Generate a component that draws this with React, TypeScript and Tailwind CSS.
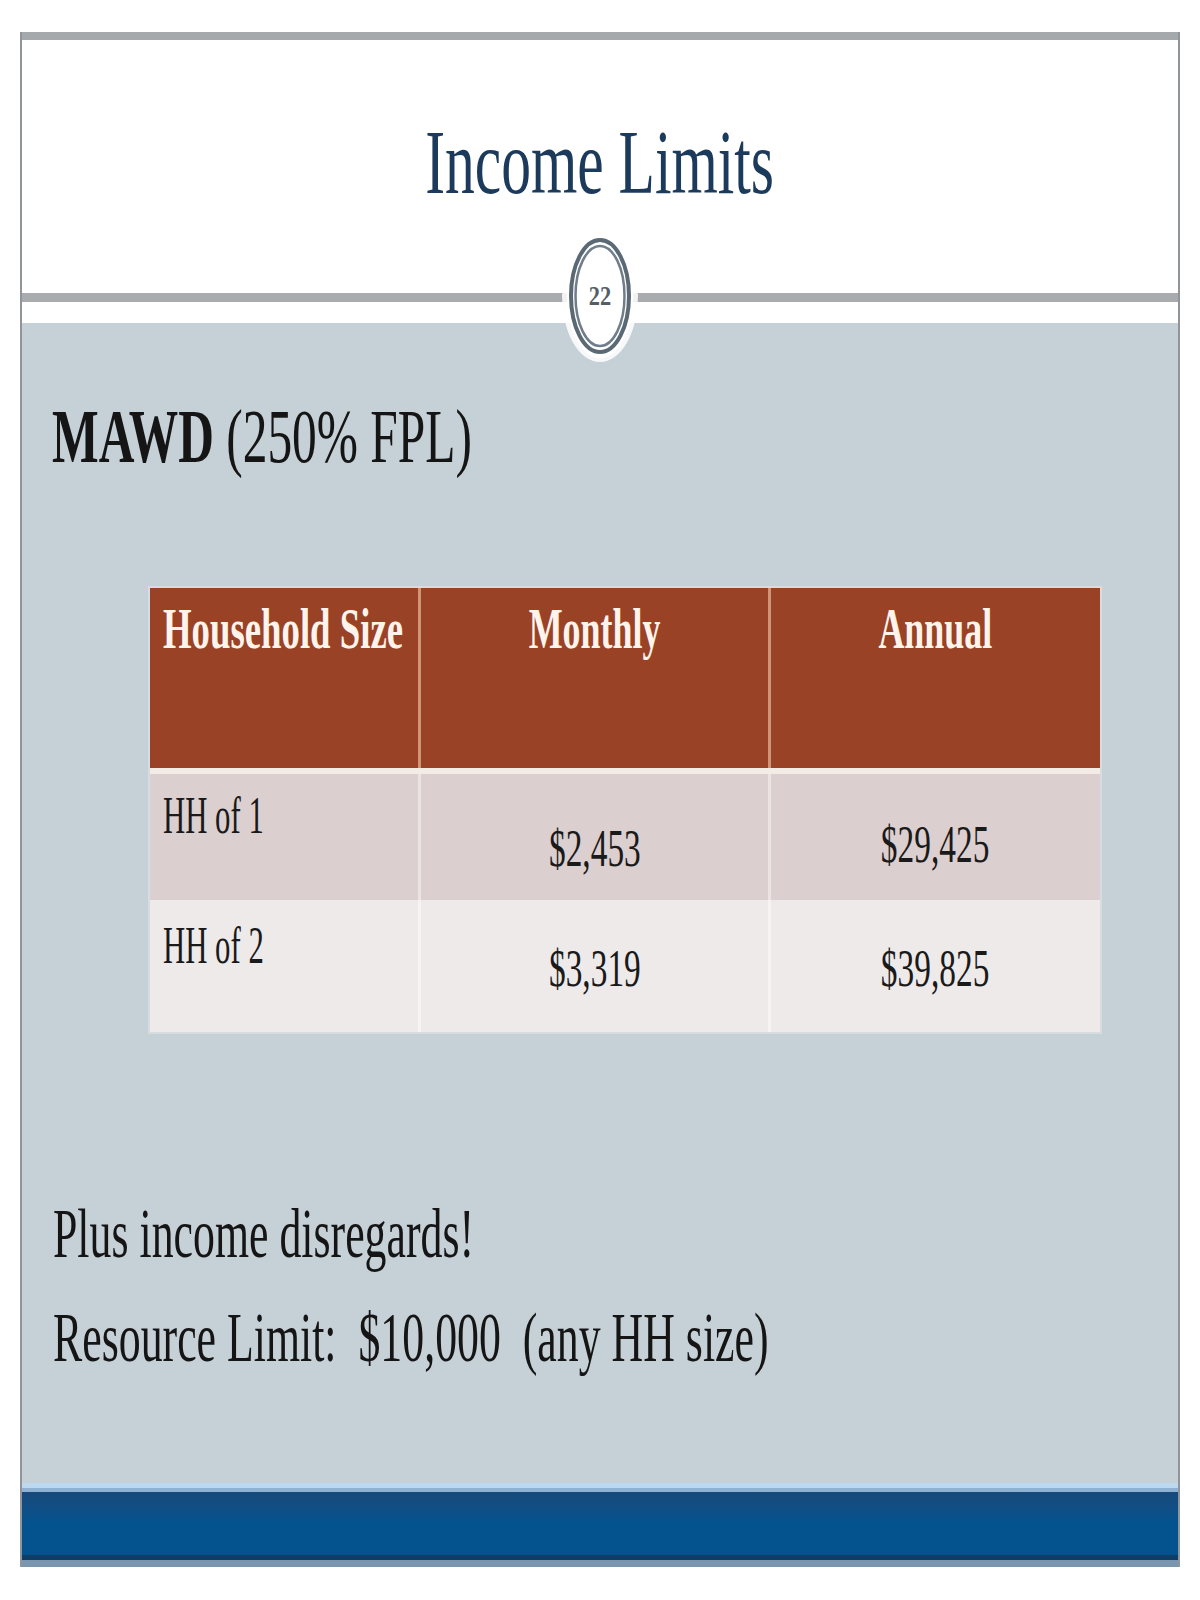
export default function App() {
  return (
    <div className="w-[1200px] h-[1600px] bg-white overflow-hidden font-['Liberation_Serif','Times_New_Roman',serif]">
      <div className="h-[32px]" />
      <div className="relative ml-[20px] w-[1160px] border-x-2 border-[#8f959a] flex flex-col">
        {/* top bar */}
        <div className="h-[8px] bg-[#a6a9ac]" />
        {/* title area */}
        <div className="h-[253px] bg-white flex justify-center pt-[76px]">
          <span className="inline-block origin-center scale-x-[0.647] whitespace-nowrap text-[92px] leading-none text-[#1b3a5c]">
            Income Limits
          </span>
        </div>
        <div className="h-[9px] bg-[#a9acaf]" />
        <div className="h-[21px] bg-white" />
        {/* content */}
        <div className="h-[1160px] bg-[#c6d0d7] flex flex-col">
          <div className="pt-[75px] pl-[30px]">
            <span className="inline-block origin-left scale-x-[0.65] whitespace-nowrap text-[76px] leading-none text-[#151515]">
              <span className="font-bold">MAWD</span> (250% FPL)
            </span>
          </div>

          {/* table */}
          <div className="ml-[128px] mt-[114px] w-[950px] ring-2 ring-[#d6dce0] flex flex-col">
            <div className="flex h-[180px] bg-[#9a4225] text-[#fff4ec] font-bold text-[57px] leading-none">
              <div className="w-[268px] pl-[13px] pt-[12px]">
                <span className="inline-block origin-left scale-x-[0.645] whitespace-nowrap">Household Size</span>
              </div>
              <div className="w-[350px] border-l-[3px] border-[#cf9579] flex justify-center pt-[12px]">
                <span className="inline-block origin-center scale-x-[0.63] whitespace-nowrap">Monthly</span>
              </div>
              <div className="w-[332px] border-l-[3px] border-[#cf9579] flex justify-center pt-[12px]">
                <span className="inline-block origin-center scale-x-[0.63] whitespace-nowrap">Annual</span>
              </div>
            </div>
            <div className="h-[6px] bg-[#f3ebe6]" />
            <div className="flex h-[126px] bg-[#dccfcf] text-[#1a1a1a] text-[53px] leading-none">
              <div className="w-[268px] pl-[13px] pt-[15px]">
                <span className="inline-block origin-left scale-x-[0.58] whitespace-nowrap">HH of 1</span>
              </div>
              <div className="w-[350px] border-l-[3px] border-[#ece4e4] flex justify-center pt-[48px]">
                <span className="inline-block origin-center scale-x-[0.63] whitespace-nowrap">$2,453</span>
              </div>
              <div className="w-[332px] border-l-[3px] border-[#ece4e4] flex justify-center pt-[44px]">
                <span className="inline-block origin-center scale-x-[0.63] whitespace-nowrap">$29,425</span>
              </div>
            </div>
            <div className="flex h-[132px] bg-[#eeeaea] text-[#1a1a1a] text-[53px] leading-none">
              <div className="w-[268px] pl-[13px] pt-[19px]">
                <span className="inline-block origin-left scale-x-[0.58] whitespace-nowrap">HH of 2</span>
              </div>
              <div className="w-[350px] border-l-[3px] border-[#f6f3f3] flex justify-center pt-[42px]">
                <span className="inline-block origin-center scale-x-[0.63] whitespace-nowrap">$3,319</span>
              </div>
              <div className="w-[332px] border-l-[3px] border-[#f6f3f3] flex justify-center pt-[42px]">
                <span className="inline-block origin-center scale-x-[0.63] whitespace-nowrap">$39,825</span>
              </div>
            </div>
          </div>

          {/* bottom text */}
          <div className="mt-[167px] pl-[31px] text-[70px] leading-none text-[#151515]">
            <div>
              <span className="inline-block origin-left scale-x-[0.626] whitespace-nowrap">Plus income disregards!</span>
            </div>
            <div className="mt-[34px]">
              <span className="inline-block origin-left scale-x-[0.626] whitespace-pre">Resource Limit:  $10,000  (any HH size)</span>
            </div>
          </div>
        </div>
        {/* footer bands */}
        <div className="h-[5px] bg-[#bcd9f1]" />
        <div className="h-[4px] bg-[#8fb2d2]" />
        <div className="h-[63px] bg-gradient-to-b from-[#17497a] via-[#03538f] to-[#04528d]" />
        <div className="h-[5px] bg-[#0e3d66]" />
        <div className="h-[7px] bg-[#7a95b0]" />

        {/* page number badge */}
        <div className="absolute left-[538px] top-[196px] w-[80px] h-[136px]">
          <svg className="absolute inset-0" width="80" height="136" viewBox="0 0 80 136">
            <ellipse cx="40" cy="68" rx="38" ry="66" fill="#ffffff" opacity="0.85" />
            <ellipse cx="40" cy="68" rx="33" ry="62" fill="#ffffff" />
            <ellipse cx="40" cy="68" rx="29" ry="56" fill="#ffffff" stroke="#5a6974" strokeWidth="4" />
            <ellipse cx="40" cy="68" rx="24.5" ry="50" fill="none" stroke="#6f7e8a" strokeWidth="2.5" />
          </svg>
          <div className="absolute inset-0 flex items-center justify-center">
            <span className="inline-block origin-center scale-x-[0.8] text-[28px] font-bold leading-none text-[#545e66]">22</span>
          </div>
        </div>
      </div>
    </div>
  );
}
